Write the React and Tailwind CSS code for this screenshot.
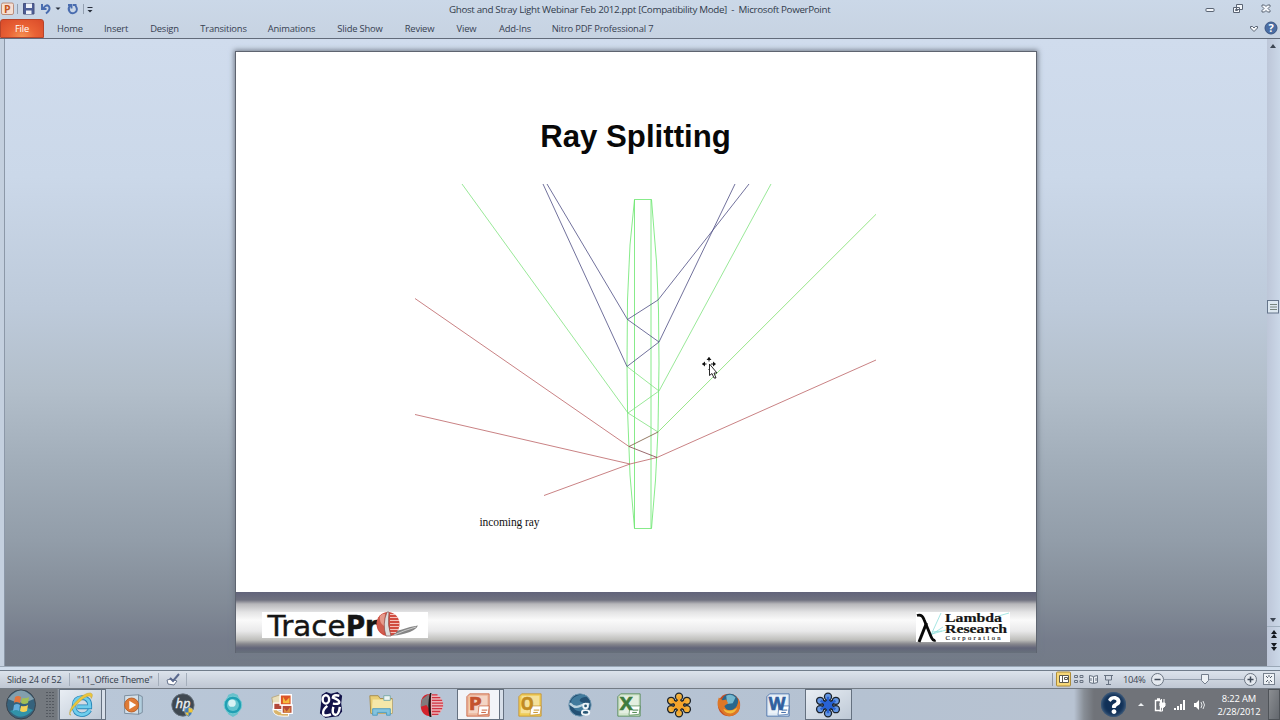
import { FaQuestion } from "react-icons/fa";

const tabs = [
    { label: "Home", width: "w-[24px]" },
    { label: "Insert", width: "w-[24px]" },
    { label: "Design", width: "w-[29px]" },
    { label: "Transitions", width: "w-[45px]" },
    { label: "Animations", width: "w-[47px]" },
    { label: "Slide Show", width: "w-[46px]" },
    { label: "Review", width: "w-[29px]" },
    { label: "View", width: "w-[21px]" },
    { label: "Add-Ins", width: "w-[32px]" },
    { label: "Nitro PDF Professional 7", width: "w-[99px]" },
];

function QuickAccess() {
    return (
        <svg className="absolute left-0 top-0" width="100" height="18" viewBox="0 0 100 18">
            <rect x="1.5" y="3" width="12" height="11.5" rx="1.5" fill="#f6dfd2" stroke="#b98d7c" />
            <text x="4" y="12.5" fontSize="10.5" fontWeight="bold" fill="#c2541f" fontFamily="Open Sans">P</text>
            <path d="M17.5 4v10M83.500 4v10" stroke="#93a0b1" />
            <path d="M23.500 3.500h10.500v10.500H23.500z" fill="#4c5d96" stroke="#48527e" />
            <path d="M26 3.500h6v4.500h-6zM26 10.500h5.500V14H26z" fill="#eef1f8" />
            <path d="M42 4v5h4.500M43 8.500q4-5 6-2T46 13.500" fill="none" stroke="#496caf" strokeWidth="2" />
            <path d="M55.500 7.500h5L58 10z" fill="#272e3b" />
            <path d="M70 5.500q-2.500 3-.5 6t5.500 1 .5-7M68 5h3.500v3.500M73 5h3.500" fill="none" stroke="#496caf" strokeWidth="1.900" />
            <path d="M87.500 7.500h5" stroke="#272e3b" />
            <path d="M87.500 10h5L90 12.500z" fill="#272e3b" />
        </svg>
    );
}

function TitleBar() {
    return (
        <div className="relative h-[18px] shrink-0">
            <QuickAccess />
            <div className="pl-[449px] pt-[2px] text-[9.800px] leading-[15px] tracking-[-0.335px] text-[#323c4c] whitespace-nowrap">
                Ghost and Stray Light Webinar Feb 2012.ppt [Compatibility Mode]&nbsp; -&nbsp; Microsoft PowerPoint
            </div>
            <svg className="absolute right-0 top-0" width="80" height="18" viewBox="1200 0 80 18" fill="#f4f7fb" stroke="#5a6474">
                <rect x="1206" y="8.500" width="8" height="3" rx=".5" />
                <path d="M1236.500 4.500h6v5h-6zM1233.500 7.500h6v5h-6zM1235.500 9.500h2v1h-2z" />
                <path d="M1262 5h2.500l1.500 1.500 1.500-1.500h2.500v1.500L1268 8.500l2 2V12h-2.500L1266 10.500l-1.500 1.500H1262v-1.500l2-2-2-2z" />
            </svg>
        </div>
    );
}

function TabBar() {
    return (
        <div className="relative flex h-[21px] shrink-0 items-start border-b border-[#626b7a] text-[9.400px] tracking-[-0.180px] text-[#374152]">
            <div className="mt-[1px] flex h-[19px] w-[44px] items-center justify-center rounded-t-[3px] border border-[#b7442a] bg-[radial-gradient(ellipse_at_50%_100%,#f59252_0%,#ea6335_45%,#d94a29_100%)] pt-[2px] text-white">
                File
            </div>
            <div className="ml-[14px] mt-[3px] flex gap-[22px] leading-[15px]">
                {tabs.map((tab) => (
                    <div key={tab.label} className={`${tab.width} flex justify-center whitespace-nowrap`}>
                        {tab.label}
                    </div>
                ))}
            </div>
            <svg className="absolute right-0 top-0" width="40" height="20" viewBox="1240 18 40 20">
                <path d="M1250.500 26.500h2l1.500 1.500 1.500-1.500h2v1.500l-3.500 3.500-3.500-3.500z" fill="#f6f9fc" stroke="#5a6474" />
                <circle cx="1271" cy="28" r="6" fill="#4a6da3" stroke="#3b5684" />
                <text x="1271" y="32" textAnchor="middle" fontSize="11" fontWeight="bold" fill="#fff" fontFamily="Open Sans">?</text>
            </svg>
        </div>
    );
}

function RayDiagram() {
    return (
        <svg width="480" height="352" viewBox="400 180 480 352" fill="none" strokeWidth=".8">
            <g stroke="#68e66c">
                <path d="M634.500 199.500H651.500L656.500 262L658.500 310L659 364L658 430L655.500 480L651.500 528.500H634.500L630 475L627.500 410L627 364L627.500 300L630 245L634.500 199.500V528.500M651 199.500V528.500" />
            </g>
            <g stroke="#7fe27d">
                <path d="M462 184L628 413L659 391L771 184M627 366.500L659 391M628 413L658 432" />
                <path d="M658 432L876 214.300" stroke="#8ce37c" strokeWidth=".9" />
            </g>
            <g stroke="#4c4c83">
                <path d="M547 184L627.500 319.500L659 342L735 184M543 184L627 366.500L659 342M627.500 319.500L658 300L713 230L749 184" />
            </g>
            <g stroke="#bb6264">
                <path d="M415 298.500L629 446.500M657 457.500L876 360M415 414.500L630 464L657 457.500M544 495.500L630 464" />
                <path d="M629 446.500L658 432" stroke="#77583c" />
                <path d="M629 446.500L657 457.500" stroke="#804248" />
            </g>
            <text x="479.500" y="525.500" fontSize="11.500" textLength="60" fill="#111" fontFamily="Liberation Serif">incoming ray</text>
        </svg>
    );
}

function TraceProLogo() {
    return (
        <svg className="overflow-visible bg-white" width="166" height="26" viewBox="262 612 166 26">
            <text x="267.500" y="635.500" fontSize="28.500" textLength="78" lengthAdjust="spacingAndGlyphs" fill="#151515" stroke="#151515" strokeWidth=".4" fontFamily="DejaVu Sans">Trace</text>
            <text x="346" y="635.500" fontSize="28.500" fontWeight="bold" textLength="32" lengthAdjust="spacingAndGlyphs" fill="#151515" stroke="#151515" strokeWidth=".6" fontFamily="DejaVu Sans">Pr</text>
            <path d="M388 635.500q3-4 14-6 8-3 16-4-2 5-13 8-11 3-17 2" fill="#858585" />
            <path d="M394 635q11-5 22-8" stroke="#c9c9c9" fill="none" />
            <ellipse cx="388" cy="624" rx="11.500" ry="12" fill="#d14c40" />
            <path d="M377 622q1-8 9-9l-2 21q-7-3-7-12" fill="#cf5c4e" />
            <path d="M380 616q3-3 5-2l-1 12q-5-3-4-10" fill="#e59a8c" />
            <path d="M390 614.500h5M390 617.500h8M390 620.500h9M390 623.500h10M390 626.500h10M390 629.500h8M390 632.500h6" stroke="#f3c1ba" />
            <path d="M387 612q-5 12-1 24l5 0q-4-11-2-24z" fill="#dcdcdc" stroke="#87524d" strokeWidth=".7" />
        </svg>
    );
}

function LambdaLogo() {
    return (
        <svg className="overflow-visible bg-white" width="94" height="30" viewBox="916 612 94 30">
            <path d="M931 635l10-22M931 635l12-8M932 634l14-4M995 617l14-4M932 632l10-1" stroke="#91dfdc" strokeWidth=".8" />
            <path d="M917 615.500q5-1.500 7 4l7 17q2 5 4.500 3.500" fill="none" stroke="#090909" strokeWidth="2.800" />
            <path d="M926.500 623L919 642" stroke="#090909" strokeWidth="3" />
            <g fill="#151515" stroke="#151515" strokeWidth=".2" fontFamily="Liberation Serif" fontWeight="bold">
                <text x="945" y="621.500" fontSize="13" textLength="57" lengthAdjust="spacingAndGlyphs">Lambda</text>
                <text x="945" y="633" fontSize="13" textLength="62" lengthAdjust="spacingAndGlyphs">Research</text>
            </g>
            <text x="945.500" y="639.500" fontSize="6.500" textLength="55" fill="#151515" stroke="#151515" strokeWidth=".15" fontFamily="Liberation Serif">Corporation</text>
        </svg>
    );
}

function Slide() {
    return (
        <div className="relative flex h-[602px] w-[802px] shrink-0 flex-col border border-b-0 border-[#5e6470] bg-white shadow-[0_0_5px_1px_#737b88]">
            <h1 className="mt-[67px] mb-[11px] h-[50px] pr-[1px] text-center font-['Liberation_Sans',sans-serif] text-[31.200px] font-bold leading-[36px] text-[#080808]">
                Ray Splitting
            </h1>
            <div className="ml-[164px] h-[352px]">
                <RayDiagram />
            </div>
            <div className="mt-auto flex h-[61px] items-start justify-between bg-[linear-gradient(#61637a_0,#6f717f_8px,#b7b7ba_12px,#e3e3e4_20px,#fafafa_28px,#e9e9ea_39px,#bebebb_48px,#87878d_52px,#626579_56px,#67707b_100%)] pl-[26px] pr-[26px] pt-[20px]">
                <TraceProLogo />
                <LambdaLogo />
            </div>
            <svg className="absolute left-[465px] top-[304px]" width="20" height="24" viewBox="701 356 20 24">
                <path d="M709 357.500v4M702.500 364h4M711 364h4M709 369v1" stroke="#111" />
                <path d="M706.500 360l2.500-3 2.500 3zM705 361.500v5l-3-2.500zM713 361.500v5l3-2.500z" fill="#111" />
                <path d="M709.500 364v11.500l2.500-2 2 4.500h2l-2-5h3z" fill="#fff" stroke="#111" strokeWidth=".9" />
            </svg>
        </div>
    );
}

function Scrollbar() {
    return (
        <div className="h-full w-[13px] bg-gradient-to-r from-[#bdc6d8] to-[#cbd8e8]">
            <svg width="13" height="627" viewBox="1267 39 13 627">
                <path d="M1270 48l3-4 3 4zM1270 618h6l-3 4z" fill="#3d4653" />
                <rect x="1267.500" y="300.500" width="11" height="12.500" fill="#dce7f0" stroke="#65758b" />
                <path d="M1270 304.500h7M1270 307h7M1270 309.500h7" stroke="#78857f" />
                <path d="M1267 626.500h13" stroke="#a0afbf" />
                <path d="M1271 634l3-4 3 4zM1271 638l3-4 3 4zM1271 643h6l-3 4zM1271 647h6l-3 4z" fill="#15191f" />
            </svg>
        </div>
    );
}

function StatusBar() {
    return (
        <div className="flex h-[18px] shrink-0 items-center justify-between border-t border-[#717d8b] bg-gradient-to-b from-[#dce3ec] to-[#bfc7d3] text-[9.200px] tracking-[-0.200px] text-[#343d4b]">
            <div className="flex h-full items-center whitespace-nowrap pl-[7px]">
                <span className="w-[62px]">Slide 24 of 52</span>
                <span className="w-[89px] border-l border-[#a4aebb] pl-[7px]">"11_Office Theme"</span>
                <span className="flex h-[13px] w-[29px] justify-center border-x border-[#a4aebb]">
                    <svg width="16" height="13" viewBox="164 672 16 13">
                        <path d="M166 679l4-1 6 2-3 4-6-1z" fill="#fff" stroke="#68758d" />
                        <path d="M169 677l3 3 6-7" fill="none" stroke="#59688d" strokeWidth="2" />
                    </svg>
                </span>
            </div>
            <svg width="230" height="17" viewBox="1050 671 230 17">
                <path d="M1052.500 673v13" stroke="#8e98a6" />
                <rect x="1056.500" y="672" width="14" height="14" rx="1" fill="#f7d878" stroke="#ad8c39" />
                <path d="M1059.500 675.500h9v7h-9zM1062.500 675.500v7M1064.500 677.500h3v2h-3z" fill="#fff" stroke="#5c5a4e" />
                <path d="M1074.500 675.500h3v2h-3zM1080 675.500h3v2h-3zM1074.500 680.500h3v2h-3zM1080 680.500h3v2h-3z" fill="none" stroke="#687382" />
                <path d="M1093.500 676.500l-4-1v7l4 1 4-1v-7zM1093.500 677v6M1091 678v3M1096 678v3" fill="#e9eef3" stroke="#687382" />
                <path d="M1104 675.500h9M1105.500 676v4h6v-4M1108.500 680v4M1106 684.500h5" fill="none" stroke="#687382" />
                <text x="1123" y="682.500" fontSize="9.400" textLength="22.500" fill="#3c4553" fontFamily="Open Sans">104%</text>
                <path d="M1164 679.500h81" stroke="#939eac" />
                <circle cx="1157.500" cy="679.500" r="6" fill="#e4e9ef" stroke="#6b7582" />
                <path d="M1154.500 679.500h6" stroke="#414b59" strokeWidth="1.500" />
                <path d="M1201.500 674.500h7v6l-3.500 3.500-3.500-3.500z" fill="#edf1f5" stroke="#747e8c" />
                <circle cx="1250.500" cy="679.500" r="6" fill="#e4e9ef" stroke="#6b7582" />
                <path d="M1247.500 679.500h6M1250.500 676.500v6" stroke="#414b59" strokeWidth="1.500" />
                <rect x="1263.500" y="673.500" width="11" height="11" fill="#eef2f6" stroke="#78828f" />
                <path d="M1266 676l2 2M1272 676l-2 2M1266 682l2-2M1272 682l-2-2M1269 675v2M1269 681.500v2" stroke="#4f5967" />
            </svg>
        </div>
    );
}

/* Taskbar icons, each on a 28 x 28 box */
const IEIcon = () => (
    <>
        <path d="M23.500 19.500Q20.500 24.500 14.500 24.500Q6.500 23.500 6.500 15T15 6Q24 6.500 23.500 16H10" fill="none" stroke="#2a87b8" strokeWidth="5" />
        <path d="M23.500 19.500Q20.500 24.500 14.500 24.500Q6.500 23.500 6.500 15T15 6Q24 6.500 23.500 16H10" fill="none" stroke="#6fcdec" strokeWidth="3.200" />
        <path d="M3 25q-4-4 5-14T24 1q4 1 1 6 0-4-5-2T7 16t-4 9" fill="#ecc63c" stroke="#b99c35" strokeWidth=".5" />
    </>
);

const MediaIcon = () => (
    <>
        <path d="M5 4l15-1v21l-15-1z" fill="#d3dfe8" stroke="#788a9c" />
        <path d="M20 3l4 2v17l-4 2z" fill="#b1cede" stroke="#788a9c" />
        <circle cx="12.500" cy="14" r="7.500" fill="#df7b36" stroke="#b95f29" />
        <path d="M10 9.500l7.500 4.500-7.500 4.500z" fill="#fff" />
    </>
);

const HpIcon = () => (
    <>
        <circle cx="15" cy="14" r="12" fill="#3f4851" stroke="#646f7a" />
        <text x="7" y="17.500" fontSize="14" fontStyle="italic" fill="#eef1f4" stroke="#eef1f4" strokeWidth=".4" fontFamily="Open Sans">hp</text>
        <path d="M17 18l4-2 4 2q1 6-4 9-5-3-4-9" fill="#437bb7" stroke="#e1e5e7" strokeWidth=".5" />
        <path d="M21 17v5h4q1-2 0-4zM21 22v4q-3-2-3.500-4z" fill="#f1c634" />
    </>
);

const TealIcon = () => (
    <>
        <path d="M10 3l5-2 5 2 2 5v11l-2 5-5 3-5-3-2-5V8z" fill="#69c1cc" />
        <circle cx="15" cy="14" r="9.500" fill="#209fb3" stroke="#73ccd4" />
        <circle cx="15" cy="14" r="6.500" fill="#61c3ce" />
        <circle cx="14" cy="12" r="4" fill="#d6f2f4" />
    </>
);

const GalleryIcon = () => (
    <>
        <path d="M3 6l9-3 3 10-10 4z" fill="#e9dfbb" stroke="#b8a77e" />
        <path d="M4 18q0 8 11 8h6v-4q-13 1-14-6z" fill="#d9b46b" stroke="#fff" />
        <path d="M5 12h9v7H5zM14 14h11v9H14z" fill="#b34839" stroke="#fff" strokeWidth="1.500" />
        <path d="M12 3h12v11H12z" fill="#dc5427" stroke="#fff" strokeWidth="1.500" />
        <path d="M15 5l3 5 4-4v6h-7z" fill="#f4bb3d" />
        <path d="M16 17l3 4 4-5v6h-7z" fill="#dc9040" />
    </>
);

const OscuIcon = () => (
    <>
        <path d="M4 3l5-3 5 2 7-2 5 4-1 8 1 9-4 5-7 1-7 1-6-5 1-8z" fill="#121249" />
        <g fill="none" stroke="#fff" strokeWidth="2.600">
            <ellipse cx="8.500" cy="8" rx="3.500" ry="4.500" />
            <path d="M23 4q-7-1.500-7 2 7 2.500 7 5t-7 1.500M10 15q-5 4-4.500 8t8.500 1M16.500 16q-2 8 2 8.500t5-8.500" />
        </g>
    </>
);

const ExplorerIcon = () => (
    <>
        <path d="M2 4h9l2 3h13v16H3z" fill="#e9ce75" stroke="#a58b48" />
        <path d="M5 8h21v15H4z" fill="#f5e7a9" />
        <path d="M17 4h7v5h-7z" fill="#edf5f4" stroke="#79a9a4" />
        <path d="M5 25v-7h19v7h-4v-3H10v3z" fill="#83c3df" stroke="#4c9bc1" />
    </>
);

const TraceIcon = () => (
    <>
        <circle cx="15" cy="14" r="12" fill="#e9b5ba" />
        <path d="M14 2Q3 2 3 14t11 12z" fill="#d3222c" />
        <path d="M4 8l8-6v16l-3-4-6 2z" fill="#817b7d" />
        <path d="M15 3h6M15 6h9M15 9h11M15 12h12M15 15h12M15 18h11M15 21h9M15 24h7" stroke="#d13442" strokeWidth="1.400" />
        <path d="M13 1h1.500q-2 11 0 26h-2q-3-13 .5-26" fill="#171717" />
    </>
);

const OfficeIcon = ({ letter, color, paper }) => (
    <>
        <path d="M5 2h21v24H2V5z" fill={paper} stroke={color} strokeWidth=".8" />
        <path d="M5 4h19v19H4z" fill="#fff" opacity=".4" />
        <path d="M15 15l11 0-1 9-11 1z" fill="#fff" stroke={color} strokeWidth=".7" />
        <text x="4" y="19" fontSize="19" fontWeight="bold" textLength={letter === "W" ? 18 : 14} lengthAdjust="spacingAndGlyphs" fill={color} stroke={color} strokeWidth=".7" fontFamily="Open Sans">{letter}</text>
        <path d="M18 19.500h6M17.500 22h5" stroke={color} />
    </>
);

const GlobeIcon = () => (
    <>
        <circle cx="14" cy="14" r="12" fill="#245174" stroke="#6f9ab5" />
        <path d="M5 8q9-8 17-3-6 0-8 3t7 4-5 9q-7 0-9-4-4-3-2-9" fill="#417b9d" />
        <path d="M3 12q5 6 11 3t10-2" fill="none" stroke="#bdd4df" strokeWidth="2.500" />
        <circle cx="20" cy="15" r="2.500" fill="#275674" stroke="#eef4f7" strokeWidth="2" />
        <ellipse cx="20" cy="22" rx="4" ry="2.500" fill="#275674" stroke="#eef4f7" strokeWidth="2" />
    </>
);

const FlowerIcon = ({ petal, center }) => (
    <g fill={petal}>
        <path d="M14 5v18M6 9.500l16 9M6 18.500l16-9" stroke="#1b232c" strokeWidth="5.500" />
        <g stroke="#1b232c" strokeWidth="1.400">
            <circle cx="14" cy="5" r="3.800" />
            <circle cx="14" cy="23" r="3.800" />
            <circle cx="5.500" cy="9.500" r="3.800" />
            <circle cx="22.500" cy="9.500" r="3.800" />
            <circle cx="5.500" cy="18.500" r="3.800" />
            <circle cx="22.500" cy="18.500" r="3.800" />
        </g>
        <path d="M14 5v18M6 9.500l16 9M6 18.500l16-9" stroke={center} strokeWidth="2.600" />
        <circle cx="14" cy="14" r="4.500" fill={center} />
    </g>
);

const FirefoxIcon = () => (
    <>
        <circle cx="14" cy="14" r="12" fill="#c54c20" />
        <circle cx="15" cy="11" r="9" fill="#29678d" />
        <path d="M11 4q6-3 10 2l-3 6-6 1z" fill="#73b7cf" />
        <path d="M3 6l4 3 4-1 2 4-4 3q2 6 9 4 6-2 6-12 5 12-3 17T7 22Q-1 16 3 6" fill="#dd7727" />
        <path d="M8 18q7 5 15-1-3 7-9 6-5-1-6-5" fill="#f4bc3b" />
    </>
);

const taskItems = [
    { name: "ie", icon: <IEIcon />, active: true, stacked: true },
    { name: "media", icon: <MediaIcon /> },
    { name: "hp", icon: <HpIcon /> },
    { name: "teal", icon: <TealIcon /> },
    { name: "gallery", icon: <GalleryIcon /> },
    { name: "oscu", icon: <OscuIcon /> },
    { name: "explorer", icon: <ExplorerIcon /> },
    { name: "trace", icon: <TraceIcon /> },
    { name: "powerpoint", icon: <OfficeIcon letter="P" color="#c4532f" paper="#edb99f" />, active: true, stacked: true, bright: true },
    { name: "outlook", icon: <OfficeIcon letter="O" color="#c28b22" paper="#efcd59" /> },
    { name: "globe", icon: <GlobeIcon /> },
    { name: "excel", icon: <OfficeIcon letter="X" color="#3f7c3f" paper="#d3e5ce" /> },
    { name: "goto", icon: <FlowerIcon petal="#f3b23d" center="#f4a32b" /> },
    { name: "firefox", icon: <FirefoxIcon /> },
    { name: "word", icon: <OfficeIcon letter="W" color="#315f9f" paper="#e2ebf5" /> },
    { name: "webinar", icon: <FlowerIcon petal="#6496e3" center="#2862d3" />, active: true },
];

function TaskButton({ item }) {
    let frame = "border-transparent";
    if (item.active) frame = "border-[#657180] bg-gradient-to-br from-[#e9eef4] to-[#bec9d6]";
    if (item.bright) frame = "border-[#657180] bg-[#f2f4f8]";
    return (
        <div className="flex h-[32px] w-[49.700px] shrink-0 justify-center pl-[1px]">
            <div className={`flex h-[31px] items-center justify-center border ${frame} ${item.stacked ? "w-[43px]" : "w-[47px]"}`}>
                <svg className="overflow-visible" width="26" height="26" viewBox="0 0 28 28">{item.icon}</svg>
            </div>
            {item.stacked && <div className="h-[31px] w-[4px] border border-l-0 border-[#657180] bg-[#d7dfe9]" />}
        </div>
    );
}

function Taskbar() {
    return (
        <div className="flex h-[32px] shrink-0 items-start border-t border-[#737b85] bg-[linear-gradient(90deg,#74797f_0,#74797f_57px,#b9c7d8_61px,#b5c2d2_850px,#b8c3d2_1074px,#888e96_1084px,#707379_1094px,#707379_100%)]">
            <svg className="shrink-0" width="57.500" height="31" viewBox="0 689 57.500 31">
                <circle cx="21" cy="704.500" r="14.500" fill="#36627c" stroke="#3c444d" />
                <path d="M8 699q13-17 26 0-13 7-26 0" fill="#839fad" />
                <path d="M10 711q11 12 23-1-10-5-23 1" fill="#3192a8" />
                <path d="M15 697q3-2 6 0l-1 6q-4-2-6 0z" fill="#e4743c" />
                <path d="M22 698q4 1 7-1l-1 6q-4 2-7 0z" fill="#a1bf55" />
                <path d="M14 705q3-2 6 0l-1 6q-3-2-6 0z" fill="#65aedd" />
                <path d="M21 706q4 1 7-1l-1 6q-4 2-7 0z" fill="#f5d155" />
                <path d="M47 692v26M50 692v26M53 692v26" stroke="#343a42" strokeDasharray="1 2" />
            </svg>
            {taskItems.map((item) => (
                <TaskButton key={item.name} item={item} />
            ))}
            <div className="ml-auto flex h-[31px] items-center">
                <div className="flex size-[25px] items-center justify-center rounded-full bg-[#113057] shadow-[inset_0_0_4px_#65829d] text-white">
                    <FaQuestion size={18} />
                </div>
                <svg className="ml-[10px]" width="74" height="28" viewBox="1136 691 74 28">
                    <path d="M1138 706h6l-3-3z" fill="#eef1f3" />
                    <path d="M1155.500 700.500h5v10h-5zM1157 699h3" fill="none" stroke="#fff" strokeWidth="1.400" />
                    <path d="M1160 703h5v3l-1.500 1.500h-2L1160 706z" fill="#fff" stroke="#fff" />
                    <path d="M1161.500 699v4M1164 699v4M1162.500 707v4h-3" fill="none" stroke="#fff" />
                    <path d="M1174 708h2v2h-2zM1177 706h2v4h-2zM1180 704h2v6h-2zM1183 700h2v10h-2z" fill="#fff" />
                    <path d="M1194 703h2l3-3v10l-3-3h-2z" fill="#fff" />
                    <path d="M1201 702q2 3 0 6M1203 701q3 4 0 8" fill="none" stroke="#e3e6e8" />
                </svg>
                <div className="ml-[2px] w-[54px] text-center text-[9.400px] leading-[13px] tracking-[-0.150px] text-white whitespace-nowrap">
                    <div>8:22 AM</div>
                    <div>2/28/2012</div>
                </div>
                <div className="ml-[2px] h-[31px] w-[12px] border border-[#4f5358] bg-gradient-to-br from-[#8b8e92] to-[#64686e]" />
            </div>
        </div>
    );
}

export default function App() {
    return (
        <div className="flex h-[720px] w-[1280px] flex-col overflow-hidden bg-gradient-to-b from-[#cbd8e8] from-0% to-[#c7d3e2] to-5% font-['Open_Sans','Noto_Sans',sans-serif]">
            <TitleBar />
            <TabBar />
            <div className="flex h-[627px] shrink-0 border-l-[4px] border-[#c4d0df]">
                <div className="flex flex-1 overflow-hidden border-l border-[#8c98a8] bg-[linear-gradient(#d0dced_0%,#cbd8e9_22%,#bdcada_43%,#b2beca_56%,#a1adb9_68%,#929da9_80%,#828b97_90%,#757c8b_96%,#737b87_100%)] pl-[230px] pt-[12px]">
                    <Slide />
                </div>
                <Scrollbar />
            </div>
            <div className="h-[4px] shrink-0 border-t border-[#9aa8b7] bg-[#d1deed]" />
            <StatusBar />
            <Taskbar />
        </div>
    );
}
